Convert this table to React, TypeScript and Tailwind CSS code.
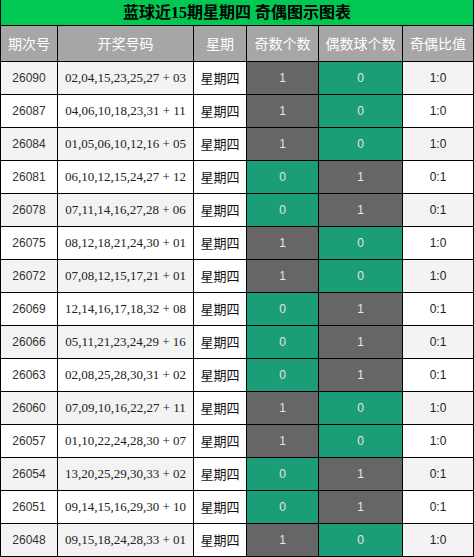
import React from "react";

const rows: [string, string, number][] = [
  ["26090", "02,04,15,23,25,27 + 03", 1],
  ["26087", "04,06,10,18,23,31 + 11", 1],
  ["26084", "01,05,06,10,12,16 + 05", 1],
  ["26081", "06,10,12,15,24,27 + 12", 0],
  ["26078", "07,11,14,16,27,28 + 06", 0],
  ["26075", "08,12,18,21,24,30 + 01", 1],
  ["26072", "07,08,12,15,17,21 + 01", 1],
  ["26069", "12,14,16,17,18,32 + 08", 0],
  ["26066", "05,11,21,23,24,29 + 16", 0],
  ["26063", "02,08,25,28,30,31 + 02", 0],
  ["26060", "07,09,10,16,22,27 + 11", 1],
  ["26057", "01,10,22,24,28,30 + 07", 1],
  ["26054", "13,20,25,29,30,33 + 02", 0],
  ["26051", "09,14,15,16,29,30 + 10", 0],
  ["26048", "09,15,18,24,28,33 + 01", 1],
];

const sans = "font-['Liberation_Sans','Noto_Sans_CJK_SC',sans-serif]";
const cjk = "font-['Noto_Sans_CJK_SC',sans-serif]";

function ValCell({ v }: { v: number }) {
  return (
    <div
      className={`flex items-center justify-center text-[12px] text-[#e6e6e6] ${sans} ${
        v === 1 ? "bg-[#666666]" : "bg-[#1b9e77]"
      }`}
    >
      {v}
    </div>
  );
}

export default function App() {
  const headers = ["期次号", "开奖号码", "星期", "奇数个数", "偶数球个数", "奇偶比值"];
  return (
    <div className="w-[474px] bg-black border-x border-b border-black">
      <div className="grid grid-cols-[56px_135px_52px_71px_83px_70px] gap-px bg-black">
        <div className="col-span-6 h-[25px] bg-[#00c853] flex items-center justify-center text-[16px] font-bold text-black font-['Liberation_Serif','Noto_Sans_CJK_SC',serif]">
          蓝球近15期星期四 奇偶图示图表
        </div>
        {headers.map((h) => (
          <div
            key={h}
            className={`h-[35px] bg-[#a6a6a6] flex items-center justify-center text-white text-[14px] ${cjk}`}
          >
            {h}
          </div>
        ))}
        {rows.map(([id, nums, odd], i) => {
          const bg = i % 2 === 0 ? "bg-[#f3f3f3]" : "bg-white";
          return (
            <React.Fragment key={id}>
              <div className={`h-[32px] ${bg} flex items-center justify-center text-[12px] text-[#333] ${sans}`}>
                {id}
              </div>
              <div className={`${bg} flex items-center justify-center text-[13px] text-[#222] font-['Liberation_Serif',serif]`}>
                {nums}
              </div>
              <div className={`bg-white flex items-center justify-center text-[13px] text-[#111] ${cjk}`}>
                星期四
              </div>
              <ValCell v={odd} />
              <ValCell v={1 - odd} />
              <div className={`${bg} flex items-center justify-center text-[12px] text-[#222] ${sans}`}>
                {odd === 1 ? "1:0" : "0:1"}
              </div>
            </React.Fragment>
          );
        })}
      </div>
    </div>
  );
}
